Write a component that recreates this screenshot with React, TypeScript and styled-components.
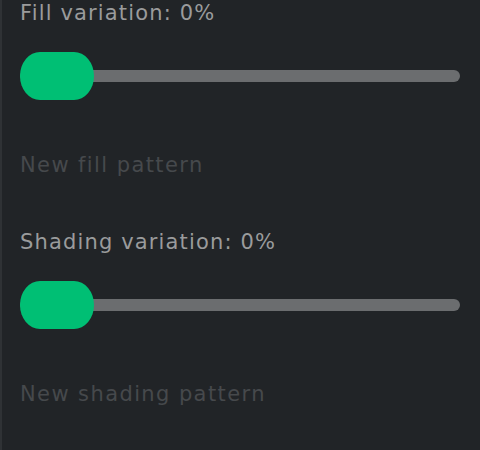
import React from "react";
import styled, { createGlobalStyle } from "styled-components";

const Global = createGlobalStyle`
  html, body { margin: 0; padding: 0; background: #212427; }
  body { font-family: "DejaVu Sans", "Noto Sans", sans-serif; }
`;

const Panel = styled.div`
  box-sizing: border-box;
  width: 480px;
  height: 450px;
  overflow: hidden;
  background: #212427;
  border-left: 2px solid #2f3235;
  padding: 0 20px 0 18px;
  display: flex;
  flex-direction: column;
`;

const Section = styled.div<{ $first?: boolean }>`
  display: flex;
  flex-direction: column;
  margin-top: ${(p) => (p.$first ? "-2px" : "47px")};
`;

const Label = styled.div`
  font-size: 21px;
  line-height: 30px;
  letter-spacing: 1.15px;
  color: #9a9b9c;
`;

const SliderRow = styled.div`
  position: relative;
  height: 48px;
  margin-top: 24px;
  display: flex;
  align-items: center;
`;

const Track = styled.div`
  flex: 1;
  height: 12px;
  border-radius: 6px;
  background: #6b6d6f;
`;

const Thumb = styled.div`
  position: absolute;
  left: 0;
  top: 0;
  width: 74px;
  height: 48px;
  border-radius: 20px / 24px;
  background: #00bf74;
`;

const GhostButton = styled.button`
  align-self: flex-start;
  margin-top: 50px;
  padding: 0;
  border: none;
  background: none;
  font-family: inherit;
  font-size: 21px;
  line-height: 30px;
  letter-spacing: 1.4px;
  color: #46494c;
  cursor: default;
`;

function SliderControl({ label, button, first }: { label: string; button: string; first?: boolean }) {
  return (
    <Section $first={first}>
      <Label>{label}</Label>
      <SliderRow>
        <Track />
        <Thumb />
      </SliderRow>
      <GhostButton disabled>{button}</GhostButton>
    </Section>
  );
}

export default function App() {
  return (
    <>
      <Global />
      <Panel>
        <SliderControl first label="Fill variation: 0%" button="New fill pattern" />
        <SliderControl label="Shading variation: 0%" button="New shading pattern" />
      </Panel>
    </>
  );
}
